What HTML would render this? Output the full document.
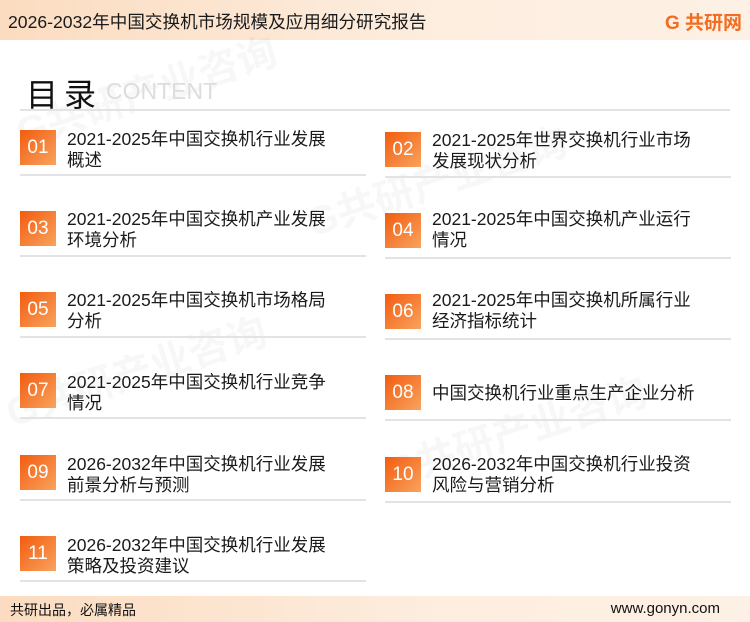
<!DOCTYPE html>
<html><head><meta charset="utf-8"><style>
*{margin:0;padding:0;box-sizing:border-box}
body{width:750px;height:622px;position:relative;background:#fff;font-family:"Liberation Sans","Noto Sans CJK SC",sans-serif;overflow:hidden;color:#111}
.hdr{position:absolute;left:0;top:0;width:750px;height:40px;background:linear-gradient(90deg,#fbdcc0,#fdeee0 60%,#fdf0e4);}
.hdr .t{position:absolute;left:8px;top:9px;font-size:17.6px;color:#1a1a1a;white-space:nowrap}
.logo{position:absolute;right:8px;top:8px;font-size:19px;font-weight:bold;color:#f36c21}
.ft{position:absolute;left:0;top:596px;width:750px;height:26px;background:linear-gradient(90deg,#fbdcc0,#fdeee0 60%,#fdf0e4)}
.ft .a{position:absolute;left:10px;top:4px;font-size:14px}
.ft .b{position:absolute;right:30px;top:4px;font-size:15px}
.ttl{position:absolute;left:26px;top:70px;font-size:32px;letter-spacing:6px}
.cn{position:absolute;left:106px;top:78px;font-size:23px;color:#ddd}
.hl{position:absolute;left:20px;top:109px;width:710px;height:2px;background:#e3e3e6}
.it{position:absolute;width:346px;height:80px}
.bx{position:absolute;left:0;width:36px;height:35px;background:linear-gradient(135deg,#f25c0f,#f9a35e);color:#fff;font-size:19px;text-align:center;line-height:35px}
.tx{position:absolute;left:47px;font-size:17.5px;line-height:21px;color:#1a1a1a;white-space:nowrap}
.ln{position:absolute;left:0;width:346px;height:2px;background:#e3e3e6}
.wm{position:absolute;font-size:40px;font-weight:bold;color:rgba(0,0,0,0.03);transform:rotate(-18deg)}
</style></head><body>
<div class="hdr"><div class="t">2026-2032年中国交换机市场规模及应用细分研究报告</div><div class="logo">G 共研网</div></div>
<div class="wm" style="left:10px;top:60px">G共研产业咨询</div>
<div class="wm" style="left:300px;top:150px">G共研产业咨询</div>
<div class="wm" style="left:0;top:340px">G共研产业咨询</div>
<div class="wm" style="left:380px;top:400px">G共研产业咨询</div>
<div class="ttl">目录</div><div class="cn">CONTENT</div><div class="hl"></div>

<div class="it" style="left:20px;top:130px"><div class="bx" style="top:0">01</div><div class="tx" style="top:-1px">2021-2025年中国交换机行业发展<br>概述</div><div class="ln" style="top:44px"></div></div>
<div class="it" style="left:385px;top:130px"><div class="bx" style="top:2px">02</div><div class="tx" style="top:0">2021-2025年世界交换机行业市场<br>发展现状分析</div><div class="ln" style="top:46px"></div></div>

<div class="it" style="left:20px;top:211px"><div class="bx" style="top:0">03</div><div class="tx" style="top:-2px">2021-2025年中国交换机产业发展<br>环境分析</div><div class="ln" style="top:44px"></div></div>
<div class="it" style="left:385px;top:211px"><div class="bx" style="top:2px">04</div><div class="tx" style="top:-2px">2021-2025年中国交换机产业运行<br>情况</div><div class="ln" style="top:46px"></div></div>

<div class="it" style="left:20px;top:292px"><div class="bx" style="top:0">05</div><div class="tx" style="top:-2px">2021-2025年中国交换机市场格局<br>分析</div><div class="ln" style="top:44px"></div></div>
<div class="it" style="left:385px;top:292px"><div class="bx" style="top:2px">06</div><div class="tx" style="top:-2px">2021-2025年中国交换机所属行业<br>经济指标统计</div><div class="ln" style="top:46px"></div></div>

<div class="it" style="left:20px;top:373px"><div class="bx" style="top:0">07</div><div class="tx" style="top:-1px">2021-2025年中国交换机行业竞争<br>情况</div><div class="ln" style="top:44px"></div></div>
<div class="it" style="left:385px;top:373px"><div class="bx" style="top:2px">08</div><div class="tx" style="top:10px">中国交换机行业重点生产企业分析</div><div class="ln" style="top:46px"></div></div>

<div class="it" style="left:20px;top:455px"><div class="bx" style="top:0">09</div><div class="tx" style="top:-1px">2026-2032年中国交换机行业发展<br>前景分析与预测</div><div class="ln" style="top:44px"></div></div>
<div class="it" style="left:385px;top:455px"><div class="bx" style="top:2px">10</div><div class="tx" style="top:-1px">2026-2032年中国交换机行业投资<br>风险与营销分析</div><div class="ln" style="top:46px"></div></div>

<div class="it" style="left:20px;top:536px"><div class="bx" style="top:0">11</div><div class="tx" style="top:-1px">2026-2032年中国交换机行业发展<br>策略及投资建议</div><div class="ln" style="top:44px"></div></div>

<div class="ft"><div class="a">共研出品，必属精品</div><div class="b">www.gonyn.com</div></div>
</body></html>
